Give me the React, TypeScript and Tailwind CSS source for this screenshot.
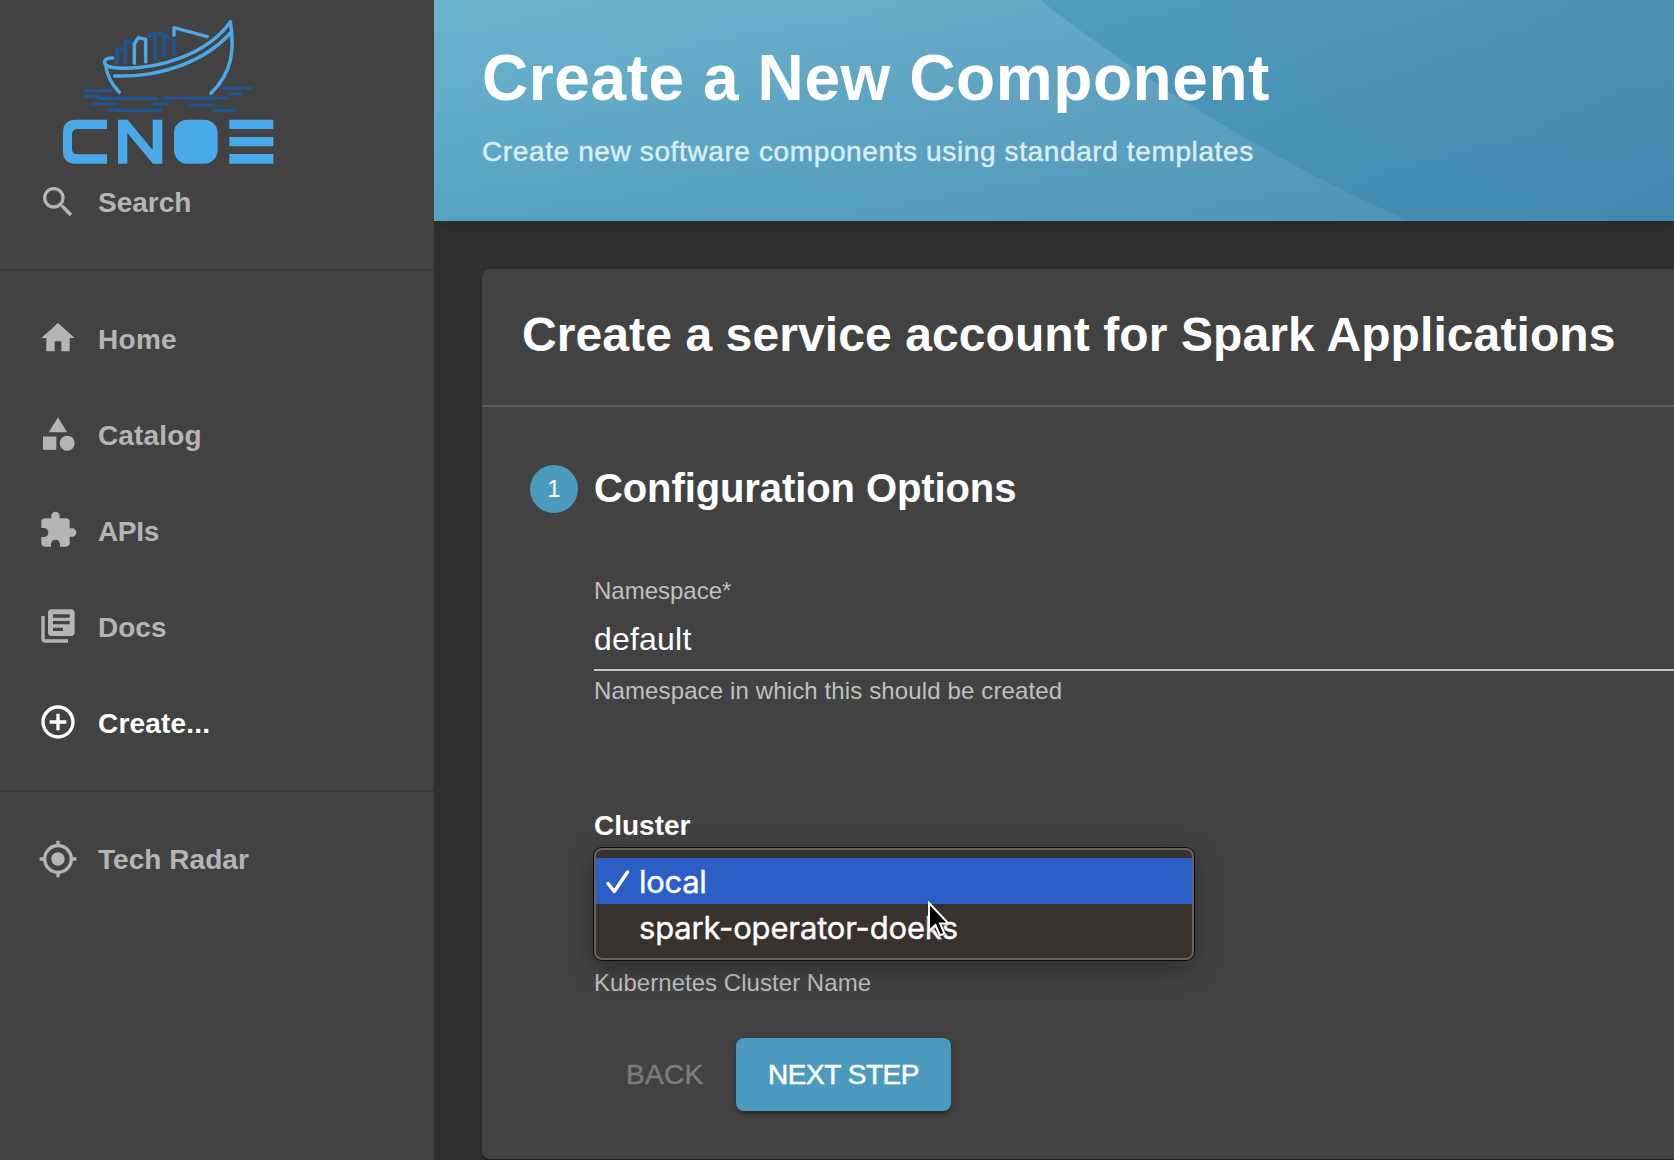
import React from 'react';
import {
  MdAddCircleOutline,
  MdCategory,
  MdExtension,
  MdHome,
  MdLibraryBooks,
  MdMyLocation,
  MdSearch,
} from 'react-icons/md';
import type { IconType } from 'react-icons';

function Logo() {
  return (
    <svg viewBox="0 0 780 540" className="ml-10 block h-[180px] w-[260px]" fill="none" aria-label="CNOE">
      {/* water */}
      <g stroke="#1f5590" strokeWidth="9.5" strokeLinecap="round">
        <path d="M137 272H214M132 289H178M176 295H349M373 294H560M157 312H229M341 312H382M208 331H362M451 315H521M519 332H584M552 265H634M570 282H603" />
      </g>
      {/* rear containers */}
      <g stroke="#1f5590" strokeWidth="11">
        <path d="M231 192V147H250M256 192V125H277M345 180V101M372 173V104M402 167V123L374 106Q345 92 323 111" />
      </g>
      {/* front container and hull */}
      <g stroke="#4aa9e8" strokeWidth="10.5" strokeLinecap="round" strokeLinejoin="round">
        <path d="M283 190V131L295 113L317 118V185" />
        <path d="M402 106V83L502 110" />
        <path d="M218 174Q194 173 194 188Q196 202 235 204C350 210 500 165 571 66" />
        <path d="M224 228C370 233 500 180 574 96" />
        <path d="M571 66C584 150 578 215 513 280" />
        <path d="M197 194Q202 240 238 277" />
      </g>
      {/* wordmark shapes */}
      <g fill="#4aa9e8">
        <path d="M201 359H107Q69 359 69 397V453Q69 491 107 491H201V463H113Q96 463 96 446V404Q96 387 113 387H201Z" />
        <path d="M234 491V359H263L338 450V359H367V491H339L262 399V491Z" />
        <rect x="402" y="359" width="131" height="132" rx="40" />
        <path d="M568 359H700V387H568ZM568 411H700V439H568ZM568 462H700V491H568Z" />
      </g>
    </svg>
  );
}

type NavItemProps = { icon: IconType; label: string; labelClass: string; active?: boolean };

function NavItem({ icon: Icon, label, labelClass, active = false }: NavItemProps) {
  return (
    <a className={`flex h-24 items-center gap-5 pl-[38px] ${active ? 'text-white' : 'text-[#b5b5b5]'}`}>
      <Icon className="size-10 shrink-0" />
      <span className={`text-[28px] leading-8 font-bold ${labelClass}`}>{label}</span>
    </a>
  );
}

function Sidebar() {
  return (
    <nav className="z-10 flex h-full w-[434px] shrink-0 flex-col bg-[#424242]">
      <Logo />
      <a className="flex h-11 items-center gap-5 pl-[38px] text-[#b5b5b5]">
        <MdSearch className="size-10 shrink-0" />
        <span className="pt-0.5 text-[28px] leading-8 font-bold">Search</span>
      </a>
      <div className="mt-[45px] mb-[19px] h-0.5 bg-[#383838]" />
      <NavItem icon={MdHome} label="Home" labelClass="pt-1 tracking-[0.3px]" />
      <NavItem icon={MdCategory} label="Catalog" labelClass="pt-1 tracking-[0.15px]" />
      <NavItem icon={MdExtension} label="APIs" labelClass="pt-1 tracking-[-0.35px]" />
      <NavItem icon={MdLibraryBooks} label="Docs" labelClass="pt-1" />
      <NavItem icon={MdAddCircleOutline} label="Create..." labelClass="pt-1 tracking-[0.2px]" active />
      <div className="mt-5 mb-[19px] h-0.5 bg-[#383838]" />
      <NavItem icon={MdMyLocation} label="Tech Radar" labelClass="pt-0.5 tracking-[0.05px]" />
    </nav>
  );
}

function PageHeader() {
  return (
    <header className="relative h-[221px] shrink-0 bg-[linear-gradient(180deg,rgba(0,90,140,0)_0%,rgba(0,90,140,0.15)_100%),linear-gradient(90deg,#56a9c7_0%,#4c90b4_100%)] pt-[46px] pl-12 shadow-[0_0_16px_4px_rgba(20,20,20,0.3)]">
      <svg viewBox="0 0 1240 221" className="absolute inset-0 h-full w-full" preserveAspectRatio="none">
        <defs>
          <linearGradient id="sheen" x1="0" y1="0" x2="0" y2="1">
            <stop offset="0" stopColor="#fff" stopOpacity="0.13" />
            <stop offset="1" stopColor="#fff" stopOpacity="0.07" />
          </linearGradient>
        </defs>
        <path d="M0 0H606Q775 132 975 221H0Z" fill="url(#sheen)" />
      </svg>
      <h1 className="relative text-[64px] leading-[64px] font-bold tracking-[0.58px] whitespace-nowrap text-white">
        Create a New Component
      </h1>
      <p className="relative mt-[26px] text-[28px] leading-8 tracking-[0.62px] whitespace-nowrap text-[#d9edf4] [-webkit-text-stroke:0.5px_#d9edf4]">
        Create new software components using standard templates
      </p>
    </header>
  );
}

function Cursor() {
  return (
    <svg viewBox="0 0 28 42" className="absolute top-[51px] left-[331px] h-[42px] w-7 drop-shadow-[0_1px_1px_rgba(0,0,0,0.4)]">
      <path
        d="M4 4V32L10.5 26L15 36.5L19.5 34.5L15 24.5H23.5Z"
        fill="#000"
        stroke="#fff"
        strokeWidth="2"
        strokeLinejoin="miter"
      />
    </svg>
  );
}

function ClusterSelect() {
  return (
    <div className="relative mt-1.5 h-[112px] w-[600px]">
      <ul className="h-full rounded-lg border-2 border-[#66625f] bg-[#38322f] pt-2 font-[Inter,sans-serif] text-[31px] leading-[46px] text-white shadow-[0_0_0_1px_#0a0a0a,0_8px_28px_rgba(0,0,0,0.35)] [-webkit-text-stroke:0.4px_#fff]">
        <li className="flex h-[46px] items-center bg-[#2c5fc6] pt-0.5 pl-2.5">
          <svg viewBox="0 0 24 24" className="mr-[9px] size-6" fill="none">
            <path d="M2 13.5L8.3 21.5L21.5 2" stroke="#fff" strokeWidth="3.4" strokeLinecap="round" strokeLinejoin="round" />
          </svg>
          <span className="tracking-[-0.3px]">local</span>
        </li>
        <li className="h-[46px] pt-px pl-[43px] tracking-[-0.15px]">spark-operator-doeks</li>
      </ul>
      <Cursor />
    </div>
  );
}

function TemplateCard() {
  return (
    <section className="mt-12 ml-12 flex h-[890px] flex-col rounded-l-lg bg-[#424242] shadow-[0_4px_2px_-2px_rgba(0,0,0,0.2),0_2px_2px_rgba(0,0,0,0.14),0_2px_6px_rgba(0,0,0,0.12)]">
      <div className="h-[138px] border-b-2 border-[#5a5a5a] pt-[38px] pl-10">
        <h2 className="text-[48px] leading-[56px] font-bold tracking-[0.09px] whitespace-nowrap text-white">
          Create a service account for Spark Applications
        </h2>
      </div>
      <div className="mt-[58px] ml-12 flex h-12 items-center gap-4">
        <div className="flex size-12 items-center justify-center rounded-full bg-[#4c9bbf] text-[24px] leading-8 text-white">1</div>
        <h3 className="pb-0.5 text-[40px] leading-[46px] font-bold tracking-[-0.1px] text-white">Configuration Options</h3>
      </div>
      <div className="mt-[62px] ml-28 flex flex-col text-[#c0c0c0]">
        <label className="text-[24px] leading-8">Namespace*</label>
        <div className="mt-3 border-b-2 border-[#c6c6c6] pb-2.5 text-[32px] leading-10 tracking-[0.2px] text-white">default</div>
        <p className="mt-1 text-[24px] leading-8 tracking-[0.13px]">Namespace in which this should be created</p>
        <label className="mt-[103px] text-[28px] leading-8 font-bold text-white">Cluster</label>
        <ClusterSelect />
        <p className="mt-[7px] text-[24px] leading-8 tracking-[0.04px]">Kubernetes Cluster Name</p>
        <div className="mt-[39px] flex h-[73px]">
          <button className="w-[142px] pt-px pl-8 text-left text-[28px] leading-8 tracking-[0.3px] text-[#7c7c7c] [-webkit-text-stroke:0.5px_#7c7c7c]">
            BACK
          </button>
          <button className="w-[215px] rounded-lg bg-[#4c9bbf] pt-px text-[28px] leading-8 tracking-[-0.45px] whitespace-nowrap text-white shadow-[0_6px_2px_-4px_rgba(0,0,0,0.2),0_4px_4px_rgba(0,0,0,0.14),0_2px_10px_rgba(0,0,0,0.12)] [-webkit-text-stroke:0.5px_#fff]">
            NEXT STEP
          </button>
        </div>
      </div>
    </section>
  );
}

export default function App() {
  return (
    <div className="flex h-[1160px] w-[1674px] overflow-hidden bg-[#303030] font-['Liberation_Sans',Arial,sans-serif]">
      <Sidebar />
      <main className="flex min-w-0 flex-1 flex-col">
        <PageHeader />
        <TemplateCard />
      </main>
    </div>
  );
}
